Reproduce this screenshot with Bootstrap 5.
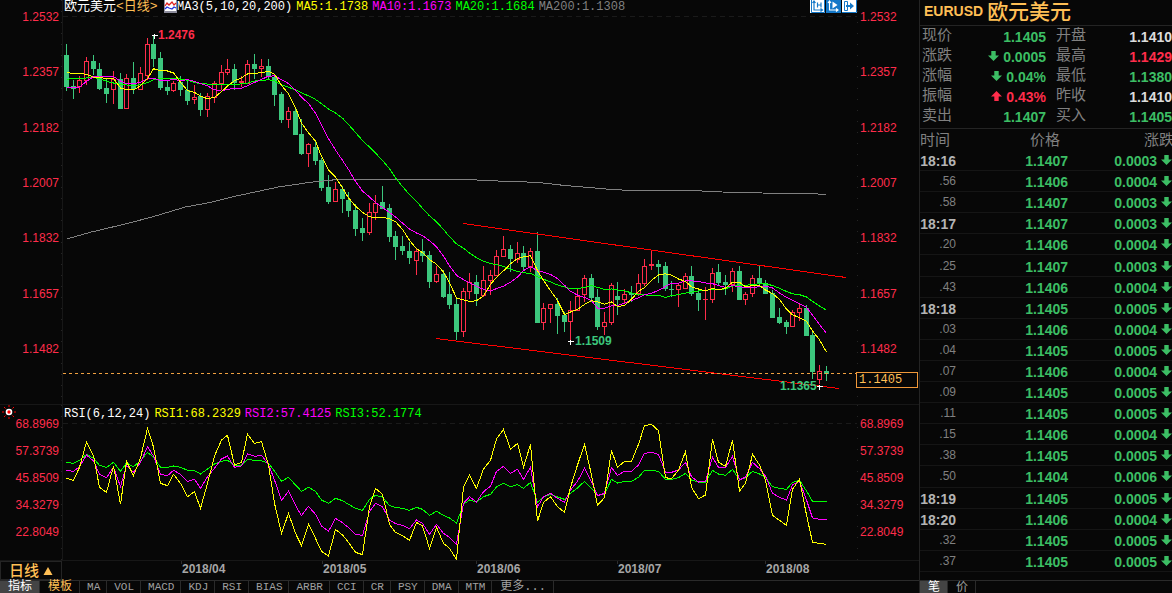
<!DOCTYPE html>
<html lang="zh-CN">
<head>
<meta charset="utf-8">
<meta name="viewport" content="width=device-width, initial-scale=1">
<title>EURUSD 欧元美元</title>
<link href="https://cdn.jsdelivr.net/npm/bootstrap@5.3.0/dist/css/bootstrap.min.css" rel="stylesheet">
<style>
  :root {
    --bg: #070707; --rule: #1c1c1c; --rise: #ff2d4b; --fall: #3cc77d;
    --quote-fall: #3cbe64; --amber: #ffbf55; --dim: #808080;
  }
  body { background: var(--bg); color: #ccc; font: 12px/14px "Liberation Sans", "Noto Sans CJK SC", sans-serif; }
  .terminal { height: 100vh; }
  .mono { font-family: "Liberation Mono", "Noto Sans CJK SC", monospace; }
  .rise { color: var(--rise); } .fall { color: var(--quote-fall); } .flat { color: #dcdcdc; }
  .amber { color: var(--amber); }
  .yellow { color: #ff0; } .magenta { color: #f0f; } .lime { color: #0f0; } .gray { color: #808080; }
  .text-pure { color: #fff; }

  /* chart column */
  .price-panel { flex: 404 1 0; }
  .rsi-panel { flex: 155 1 0; border-top: 1px solid #171717; }
  .axis { width: 62px; color: var(--rise);
    background: repeating-linear-gradient(#242424 0 1px, transparent 1px 11px) no-repeat; background-size: 1px 100%; }
  .axis-left { text-align: right; padding-right: 3px; background-position: right top; }
  .axis-right { padding-left: 3px; }
  .price-panel .axis { padding-top: 10px; padding-bottom: 48px; }
  .rsi-panel .axis { padding-top: 12px; padding-bottom: 21px; }
  .plot { border-left: 1px solid #171717; }
  .legend-row { height: 14px; gap: 4px; padding-left: 1px; }
  .rsi-panel .legend-row { height: 18px; }
  .pair-name { font-size: 13px; width: 96px; }
  .legend-icon { margin-right: -4px; }
  .tools { gap: 1px; }
  .canvas-box { flex: 1 1 0; min-height: 0; }
  .canvas-box svg { display: block; width: 100%; height: 100%; overflow: visible; }
  .tool { width: 15px; height: 13px; padding: 0; border: 0; background: #fff; display: flex; }
  .price-tag { top: 92%; left: -1px; right: 1px; border: 1px solid #f0983a; background: var(--bg); color: var(--amber); padding: 0 2px; }
  .alarm { left: 2px; top: 0; }
  .date-row { height: 20px; border-top: 1px solid #171717; }
  .period { width: 62px; padding: 0; border: 1px solid #242424; background: none; font-size: 15px; font-weight: 500; line-height: 16px; color: var(--amber); }
  .months { display: grid; grid-template-columns: 119fr 141fr 154fr 141fr 148fr 154fr; font-weight: 700; color: #a6a6a6; }
  .months time { border-left: 1px solid; border-image: linear-gradient(#2c2c2c 4px, transparent 4px) 1; padding-top: 1px; }

  /* tab strips along the bottom */
  .strip { height: 13px; border-top: 1px solid #2a2a2a; }
  .strip button { border: 0; border-right: 1px solid #2a2a2a; background: none; color: #a0a0a0; line-height: 12px; padding: 0 6px 0 7px; font-size: 11px; flex: none; height: 12px; }
  .strip .cjk { font-size: 12px; padding: 0 7px 0 8px; }
  .strip .on { background: #444; color: #fff; }
  .strip .amber { color: var(--amber); }

  /* quote column */
  .quotes { width: 253px; border-left: 1px solid #242424; overflow: hidden; }
  .quotes h1 { height: 26px; margin: 0; padding: 0 0 2px 4px; gap: 4px; font-size: 14px; font-weight: 700; border-bottom: 1px solid #242424; }
  .quotes h1 span:last-child { font-size: 21px; font-weight: 500; line-height: 24px; }
  .quotes th { font-weight: 400; color: var(--dim); font-size: 15px; line-height: 18px; padding: 0; }
  .quotes td { font-weight: 700; font-size: 14px; text-align: right; padding: 2px 0 0; line-height: 16px; }
  .quotes table { table-layout: fixed; border-collapse: separate; border-spacing: 0; }
  .summary { width: 252px; }
  .summary-box { border-bottom: 1px solid #242424; padding-bottom: 2px; }
  .summary tr { height: 20px; }
  .summary th { padding: 0 0 2px 2px; }
  .summary th + td + th { padding-left: 10px; }
  .label-col { width: 42px; } .value-col { width: 84px; } .label-col-2 { width: 52px; }
  .time-col { width: 36px; } .price-col { width: 112px; }
  .ticks-box { flex: 1 1 0; min-height: 0; padding-bottom: 8px; }
  .ticks { width: 254px; height: 100%; }
  .ticks thead th { height: 21px; }
  .ticks td { border-bottom: 1px solid #151515; }
  .ticks td:first-child { color: #b4b4b4; }
  .ticks .sub td:first-child { color: var(--dim); font-weight: 400; font-size: 12px; padding: 0; line-height: 14px; }
  .ticks td:last-child { padding-right: 2px; }
  .arrow { width: 11px; height: 11px; fill: currentColor; vertical-align: 0; }
</style>
</head>
<body>
<main class="terminal d-flex overflow-hidden">
  <section class="d-flex flex-column flex-grow-1 overflow-hidden">
    <div class="price-panel d-flex">
      <div class="axis axis-left d-flex flex-column justify-content-between">
        <span>1.2532</span><span>1.2357</span><span>1.2182</span><span>1.2007</span><span>1.1832</span><span>1.1657</span><span>1.1482</span>
      </div>
      <div class="plot d-flex flex-column flex-grow-1">
        <div class="legend-row d-flex mono text-nowrap">
          <span class="pair-name text-pure">欧元美元<span class="amber">&lt;日线&gt;</span></span>
          <svg class="legend-icon" width="13" height="13" viewBox="0 0 13 13" aria-hidden="true"><path d="M0 0H13V13H0Z" fill="#8c8c9c"/><path d="M1 0H12V11H1Z" fill="#fff"/><path d="M1 6l2-3 2 2 3-3 2 3 2-2" fill="none" stroke="#e02020" stroke-width="1.3"/><path d="M1 9l2-2 2 1 3 1 2-2 2 1" fill="none" stroke="#2030e0" stroke-width="1.3"/></svg>
          <span class="text-pure">MA3(5,10,20,200)</span>
          <span class="yellow">MA5:1.1738</span><span class="magenta">MA10:1.1673</span><span class="lime">MA20:1.1684</span><span class="gray">MA200:1.1308</span>
          <div class="tools ms-auto d-flex">
            <button class="tool" type="button" aria-label="K线"><svg width="15" height="13" viewBox="0 0 15 13"><path d="M1.500-1V12.500H14.500V-1" fill="none" stroke="#1478c8"/><path d="M4 1V10H12.500M2.500 3l1.500-2 1.500 2M10.500 8.500l2 1.500-2 1.500M7.500 2.500v5M11 2.500v5M7.500 5h3" fill="none" stroke="#1478c8" stroke-width="1.2"/></svg></button>
            <button class="tool" type="button" aria-label="播放"><svg width="15" height="13" viewBox="0 0 15 13"><path d="M0 0H15V13H0Z" fill="#1478c8"/><path d="M6.500 1.500v7l5-3.500z" fill="#fff"/><path d="M3.500 1V10H12M2 3l1.500-2L5 3M10 8.500l2 1.500-2 1.500" fill="none" stroke="#fff" stroke-width="1.100"/></svg></button>
            <button class="tool" type="button" aria-label="跳转"><svg width="15" height="13" viewBox="0 0 15 13"><path d="M0 12.500H14.500V0" fill="none" stroke="#1478c8"/><path d="M2.500 1.500H5.500V10.500H2.500Z" fill="none" stroke="#1478c8"/><path d="M4 5h4V2.500L12 6 8 9.500V7H4z" fill="#1478c8"/></svg></button>
          </div>
        </div>
        <div class="canvas-box"><svg id="price" role="img" aria-label="日线 K 线图"></svg></div>
      </div>
      <div class="axis axis-right position-relative d-flex flex-column justify-content-between">
        <span>1.2532</span><span>1.2357</span><span>1.2182</span><span>1.2007</span><span>1.1832</span><span>1.1657</span><span>1.1482</span>
        <div class="price-tag position-absolute mono">1.1405</div>
      </div>
    </div>

    <div class="rsi-panel d-flex position-relative">
      <svg class="alarm position-absolute" width="14" height="14" viewBox="0 0 14 14" aria-hidden="true"><path d="M7 0v2M7 12v2M0 7h2M12 7h2M2 2l1.500 1.500M10.500 10.500L12 12M12 2l-1.500 1.500M3.500 10.500L2 12" stroke="#f00"/><circle cx="7" cy="7" r="2.500" fill="#f00" stroke="#fff" stroke-width="1.600"/></svg>
      <div class="axis axis-left d-flex flex-column justify-content-between">
        <span>68.8969</span><span>57.3739</span><span>45.8509</span><span>34.3279</span><span>22.8049</span>
      </div>
      <div class="plot d-flex flex-column flex-grow-1">
        <div class="legend-row d-flex align-items-center mono text-nowrap">
          <span class="text-pure">RSI(6,12,24)</span><span class="yellow">RSI1:68.2329</span><span class="magenta">RSI2:57.4125</span><span class="lime">RSI3:52.1774</span>
        </div>
        <div class="canvas-box"><svg id="rsi" role="img" aria-label="RSI 指标"></svg></div>
      </div>
      <div class="axis axis-right d-flex flex-column justify-content-between">
        <span>68.8969</span><span>57.3739</span><span>45.8509</span><span>34.3279</span><span>22.8049</span>
      </div>
    </div>

    <div class="date-row d-flex">
      <button class="period d-flex align-items-center justify-content-center gap-1" type="button">日线<svg width="10" height="10" viewBox="0 0 10 10" aria-hidden="true"><path d="M5 1L9.500 9H.5Z" fill="#ffbf55"/></svg></button>
      <div class="months flex-grow-1">
        <span></span><time>2018/04</time><time>2018/05</time><time>2018/06</time><time>2018/07</time><time>2018/08</time>
      </div>
    </div>

    <nav class="strip d-flex mono">
      <button type="button" class="cjk on">指标</button><button type="button" class="cjk amber">模板</button><button type="button">MA</button><button type="button">VOL</button><button type="button">MACD</button><button type="button">KDJ</button><button type="button">RSI</button><button type="button">BIAS</button><button type="button">ARBR</button><button type="button">CCI</button><button type="button">CR</button><button type="button">PSY</button><button type="button">DMA</button><button type="button">MTM</button><button type="button" class="cjk">更多...</button>
    </nav>
  </section>

  <aside class="quotes d-flex flex-column flex-shrink-0">
    <h1 class="amber d-flex align-items-center"><span>EURUSD</span><span>欧元美元</span></h1>
    <div class="summary-box">
      <table class="summary">
        <colgroup><col class="label-col"><col class="value-col"><col class="label-col-2"><col></colgroup>
        <tbody>
          <tr><th scope="row">现价</th><td class="fall">1.1405</td><th scope="row">开盘</th><td class="flat">1.1410</td></tr>
          <tr><th scope="row">涨跌</th><td class="fall"><svg class="arrow" viewBox="0 0 10 10"><path d="M3 0h4v4h3L5 9 0 4h3z"/></svg> 0.0005</td><th scope="row">最高</th><td class="rise">1.1429</td></tr>
          <tr><th scope="row">涨幅</th><td class="fall"><svg class="arrow" viewBox="0 0 10 10"><path d="M3 0h4v4h3L5 9 0 4h3z"/></svg> 0.04%</td><th scope="row">最低</th><td class="fall">1.1380</td></tr>
          <tr><th scope="row">振幅</th><td class="rise"><svg class="arrow" viewBox="0 0 10 10"><path d="M3 9h4V5h3L5 0 0 5h3z"/></svg> 0.43%</td><th scope="row">昨收</th><td class="flat">1.1410</td></tr>
          <tr><th scope="row">卖出</th><td class="fall">1.1407</td><th scope="row">买入</th><td class="fall">1.1405</td></tr>
        </tbody>
      </table>
    </div>
    <div class="ticks-box">
      <table class="ticks">
        <colgroup><col class="time-col"><col class="price-col"><col></colgroup>
        <thead><tr><th scope="col" class="text-start">时间</th><th scope="col" class="text-end pe-2">价格</th><th scope="col" class="text-end">涨跌</th></tr></thead>
        <tbody id="ticks"></tbody>
      </table>
    </div>
    <nav class="strip d-flex">
      <button type="button" class="cjk on">笔</button><button type="button" class="cjk">价</button>
    </nav>
  </aside>
</main>

<script src="https://cdn.jsdelivr.net/npm/bootstrap@5.3.0/dist/js/bootstrap.bundle.min.js"></script>
<script>
// Latest trades: time, price, change
const trades = [['18:16','1.1407',3],['.56','1.1406',4],['.58','1.1407',3],['18:17','1.1407',3],['.20','1.1406',4],['.25','1.1407',3],['.43','1.1406',4],['18:18','1.1405',5],['.03','1.1406',4],['.04','1.1405',5],['.07','1.1406',4],['.09','1.1405',5],['.11','1.1405',5],['.15','1.1406',4],['.38','1.1405',5],['.50','1.1404',6],['18:19','1.1405',5],['18:20','1.1406',4],['.32','1.1405',5],['.37','1.1405',5]];
document.getElementById('ticks').innerHTML = trades.map(([t, p, c]) =>
  `<tr class="${t[0] === '.' ? 'sub' : ''}"><td>${t}</td><td class="fall">${p}</td><td class="fall">0.000${c} <svg class="arrow" viewBox="0 0 10 10"><path d="M3 0h4v4h3L5 9 0 4h3z"/></svg></td></tr>`).join('');

// Candles on the chart's vertical scale (three units per pixel, growing downwards):
// high, low, body top, body bottom, 1 = rising day
const candles = [
[132,272,165,262,0],[240,297,258,266,0],[228,278,240,262,1],[171,255,183,242,1],[165,225,183,206,0],[189,270,206,267,0],[235,309,264,282,0],[213,312,238,270,1],[219,327,237,327,0],[222,327,235,327,1],
[186,282,234,268,0],[201,270,219,270,1],[114,240,132,228,1],[105,200,132,177,0],[156,270,174,264,0],[240,285,261,273,0],[243,276,249,273,1],[228,288,246,270,0],[237,315,269,303,0],[255,312,290,300,1],
[279,348,288,330,0],[280,351,288,330,1],[243,309,250,294,1],[195,270,216,252,1],[177,225,208,219,1],[192,270,207,250,0],[228,262,243,249,1],[180,252,192,252,1],[162,238,192,207,0],[177,231,198,207,1],
[177,240,198,230,0],[222,318,230,285,0],[276,369,282,360,0],[321,384,334,360,1],[320,405,333,405,0],[357,465,402,462,0],[429,501,432,462,1],[420,495,441,483,0],[475,573,480,564,0],[525,612,561,606,0],
[546,606,568,606,1],[558,639,567,597,0],[576,651,600,633,0],[612,708,630,687,0],[654,723,684,699,0],[609,705,636,699,1],[585,660,609,639,1],[558,627,606,627,0],[612,726,624,711,0],[693,780,708,741,0],
[708,765,738,753,0],[726,792,753,774,0],[747,825,753,783,1],[717,786,753,768,0],[753,864,765,846,0],[798,849,822,846,1],[810,894,822,891,0],[816,927,882,915,0],[897,1020,912,996,0],[864,1011,873,996,1],
[819,897,846,876,1],[825,918,846,882,0],[798,891,840,888,1],[810,885,825,843,1],[750,828,768,828,1],[708,771,747,771,1],[735,816,747,777,0],[726,789,759,780,1],[738,810,759,801,0],[744,816,753,801,1],
[696,969,753,969,0],[909,990,924,969,1],[912,969,912,927,1],[894,1002,912,948,0],[936,996,945,966,0],[903,1026,930,966,1],[867,933,888,933,1],[825,906,834,885,1],[822,906,834,894,0],[867,990,891,981,0],
[936,1005,966,981,1],[849,975,855,969,1],[846,945,888,900,0],[867,912,881,900,1],[858,906,879,885,0],[822,888,849,882,1],[777,858,798,852,1],[753,810,792,798,1],[780,849,792,801,0],[786,873,798,867,0],
[843,891,867,870,0],[849,921,855,870,1],[819,867,828,867,1],[798,888,828,882,0],[873,933,879,900,0],[861,960,897,900,1],[804,909,819,900,1],[792,858,816,849,0],[825,885,846,855,0],[804,876,813,855,1],
[798,900,813,900,0],[876,915,882,900,1],[825,891,834,882,1],[795,858,834,852,0],[840,882,849,882,0],[870,954,879,954,0],[924,972,951,969,0],[960,1002,966,981,0],[930,981,936,981,1],[912,963,924,939,1],
[915,1008,924,1008,0],[996,1137,1005,1116,0],[1095,1152,1113,1140,1],[1098,1143,1113,1122,0]];

// Averages that start before the first visible candle
const seeds = {
  5: [218,220,220,223],
  10: [262,262,261,244,230,228,228,230,243],
  20: [238,235,235,234,232,236,244,249,253,255,257,254,248,239,236,235,235,237,241]
};
const longAverage = [[200,717],[270,697],[380,671],[463,649],[556,621],[628,608],[700,590],[835,561],[930,547],[1017,538],[1400,538],[1460,542],[1560,545],[1620,548],[1690,556],[1762,562],[1830,568],[1884,571],[2085,572],[2166,576],[2286,579],[2427,581],[2478,583]];

const rsi = {
'#ff0': [235,241,202,126,167,262,277,198,313,184,227,174,85,141,250,257,223,250,290,275,325,250,168,120,106,195,187,102,130,125,195,310,400,340,400,437,373,415,454,468,388,405,427,457,464,320,265,283,373,397,407,421,367,378,445,382,430,445,478,262,226,265,207,181,117,88,148,130,202,133,364,307,290,320,337,262,195,133,225,316,293,151,202,184,184,133,77,73,92,233,236,210,155,262,296,285,118,187,199,121,273,250,163,195,240,346,361,376,268,238,345,427,430,433],
'#f0f': [211,214,200,165,183,223,233,202,260,196,217,187,140,168,223,227,211,223,244,238,265,230,205,177,168,202,198,161,169,166,193,240,301,274,316,347,319,343,378,394,355,368,383,403,406,335,310,320,360,371,376,386,360,370,403,373,400,412,433,310,290,306,275,259,214,199,220,208,238,202,321,290,280,295,307,270,244,205,245,287,280,203,226,214,214,195,160,157,163,217,217,210,187,230,246,244,172,202,202,169,240,231,187,206,228,280,292,300,255,243,300,354,358,358],
'#0f0': [187,190,181,163,175,196,202,187,214,189,200,182,157,172,202,202,198,202,211,212,222,207,192,184,181,196,195,178,181,182,190,213,244,232,255,274,262,274,300,310,295,302,313,325,331,298,286,291,317,322,325,331,322,328,346,334,346,354,369,313,300,306,290,283,261,250,260,254,265,247,307,290,283,291,298,280,264,244,265,286,282,238,249,244,244,232,211,211,214,238,238,233,220,240,246,247,211,222,226,208,240,233,214,222,232,260,265,268,247,241,273,304,304,304]
};

const RISE = '#ff2d4b', FALL = '#3cc77d';
const PLOT_W = 794, PRICE_H = 390, RSI_H = 137;   // design size of the two plots

function average(n) {
  const close = candles.map(c => c[4] ? c[2] : c[3]);
  return close.map((_, i) => i < n - 1 ? seeds[n][i]
    : close.slice(i - n + 1, i + 1).reduce((a, b) => a + b) / n);
}

function draw() {
  const price = document.getElementById('price'), osc = document.getElementById('rsi');
  const box = price.parentNode.getBoundingClientRect(), box2 = osc.parentNode.getBoundingClientRect();
  const sx = box.width / PLOT_W, sy = box.height / PRICE_H, sr = box2.height / RSI_H;
  const X = x => (x - 63) * sx, Y = y => (y - 14) * sy, R = y => (y - 23) * sr;
  const cx = i => Math.floor(X(66.300 + i * 6.727));
  const line = (pts, color) => `<polyline points="${pts.map(p => p.join()).join(' ')}" fill="none" stroke="${color}" shape-rendering="crispEdges"/>`;
  const seg = (x1, y1, x2, y2, color, extra = '') => `<path d="M${x1} ${y1}L${x2} ${y2}" stroke="${color}" shape-rendering="crispEdges" ${extra}/>`;

  let s = seg(0, Y(16.500), box.width, Y(16.500), '#1a1a1a', 'stroke-dasharray="5 4"');
  candles.forEach(([hi, lo, top, bot, up], i) => {
    const x = cx(i), [h, l, t, b] = [hi, lo, top, bot].map(v => Math.round(Y(v / 3)));
    const c = up ? RISE : FALL;
    s += `<rect x="${x}" y="${h}" width="1" height="${l - h}" fill="${c}"/>`;
    s += up && b - t > 2
      ? `<rect x="${x - 1.500}" y="${t + .5}" width="4" height="${b - t - 1}" fill="#070707" stroke="${c}"/>`
      : `<rect x="${x - 2}" y="${t}" width="5" height="${Math.max(1, b - t)}" fill="${c}"/>`;
  });
  s += line(longAverage.map(([x, y]) => [X(x / 3), Y(y / 3)]), '#808080');
  [[20, '#0f0'], [10, '#f0f'], [5, '#ff0']].forEach(([n, c]) => {
    s += line(average(n).map((y, i) => [cx(i) + .5, Y(y / 3)]), c);
  });
  s += seg(X(463), Y(223.500), X(846), Y(277.500), '#f00') + seg(X(436), Y(338.500), X(839), Y(388.500), '#f00');
  s += seg(0, Y(373.500), box.width, Y(373.500), '#f0a040', 'stroke-dasharray="3 3"');
  const mark = (x, y, tx, ty, t, c) => seg(X(x - 2.500), Y(y), X(x + 3.500), Y(y), '#fff') + seg(X(x), Y(y - 2), X(x), Y(y + 3), '#fff')
    + `<text x="${X(tx)}" y="${Y(ty)}" fill="${c}" font-size="12" font-weight="700">${t}</text>`;
  s += mark(154.500, 35.500, 158, 39, '1.2476', RISE) + mark(570.500, 341.500, 575, 345, '1.1509', FALL) + mark(819.500, 386.500, 780, 390, '1.1365', FALL);
  price.innerHTML = s;

  let r = seg(0, R(23.500), box.width, R(23.500), '#1a1a1a', 'stroke-dasharray="5 4"');
  for (const c of ['#0f0', '#f0f', '#ff0']) r += line(rsi[c].map((y, i) => [cx(i) + .5, R(y / 3)]), c);
  osc.innerHTML = r;
}
draw();
addEventListener('resize', draw);
</script>
</body>
</html>
